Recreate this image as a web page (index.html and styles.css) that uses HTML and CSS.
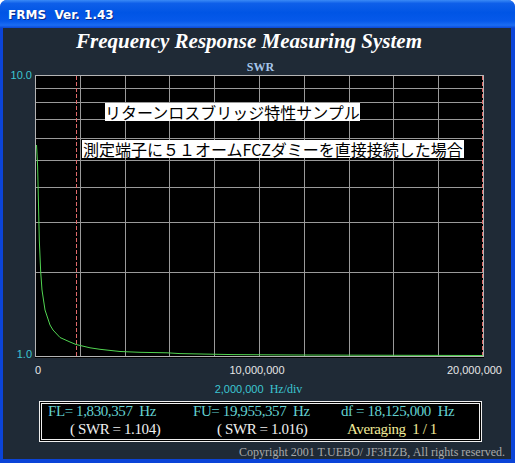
FILE: index.html
```html
<!DOCTYPE html>
<html lang="ja">

<head>
  <meta charset="UTF-8" />
  <title>FRMS Ver. 1.43</title>
  <link rel="stylesheet" href="styles.css">
</head>

<body>
  <div class="window">
    <div class="titlebar">FRMS&nbsp; Ver. 1.43</div>

    <div class="client">
      <h1 class="app-title">Frequency Response Measuring System</h1>
      <div class="swr-title">SWR</div>

      <div class="chart">
        <span class="y-label y-top">10.0</span>
        <span class="y-label y-bottom">1.0</span>

        <div class="plot">
          <svg class="plot-svg" width="449" height="283" viewBox="35 75 449 283">
            <rect x="35" y="75" width="449" height="283" fill="#000" />
            <!--縦グリッド 2,000,000 Hz/div -->
            <g stroke="#9a9a9a" stroke-width="1">
              <line x1="80.5" y1="75" x2="80.5" y2="357" />
              <line x1="125.5" y1="75" x2="125.5" y2="357" />
              <line x1="169.5" y1="75" x2="169.5" y2="357" />
              <line x1="214.5" y1="75" x2="214.5" y2="357" />
              <line x1="259.5" y1="75" x2="259.5" y2="357" />
              <line x1="304.5" y1="75" x2="304.5" y2="357" />
              <line x1="349.5" y1="75" x2="349.5" y2="357" />
              <line x1="393.5" y1="75" x2="393.5" y2="357" />
              <line x1="438.5" y1="75" x2="438.5" y2="357" />
              <!-- 対数グリッド 2..9 -->
              <line x1="35" y1="88.5" x2="483" y2="88.5" />
              <line x1="35" y1="102.5" x2="483" y2="102.5" />
              <line x1="35" y1="119.5" x2="483" y2="119.5" />
              <line x1="35" y1="138.5" x2="483" y2="138.5" />
              <line x1="35" y1="160.5" x2="483" y2="160.5" />
              <line x1="35" y1="187.5" x2="483" y2="187.5" />
              <line x1="35" y1="222.5" x2="483" y2="222.5" />
              <line x1="35" y1="272.5" x2="483" y2="272.5" />
            </g>
            <rect x="35.5" y="75.5" width="448" height="281" fill="none" stroke="#b4b4b4" />
            <!-- FL / FU -->
            <g stroke="#e06a6a" stroke-dasharray="4 2">
              <line x1="76.5" y1="76" x2="76.5" y2="357" />
              <line x1="482.5" y1="76" x2="482.5" y2="357" />
            </g>
            <polyline fill="none" stroke="#52d552" stroke-width="1"
              points="36.5,145 36.8,150 37.6,166 38.3,196 39.3,240 40.7,272 42,290 45,310 50,325 53,330 60,337.5 70,342 76,344.5 90,347.8 100,349.3 120,351.5 140,352.3 167,352.8 180,353.6 233,354.6 300,355 400,355.3 483,355.5" />
          </svg>

          <div class="note note-1">リターンロスブリッジ特性サンプル</div>
          <div class="note note-2">測定端子に５１オームFCZダミーを直接接続した場合</div>
        </div>

        <span class="x-label x-min">0</span>
        <span class="x-label x-mid">10,000,000</span>
        <span class="x-label x-max">20,000,000</span>
      </div>

      <div class="div-label">2,000,000&nbsp; <span class="unit">Hz/div</span></div>

      <div class="info">
        <span class="freq">FL= 1,830,357  Hz</span>
        <span class="freq">FU= 19,955,357  Hz</span>
        <span class="freq">df = 18,125,000  Hz</span>
        <span class="swr swr-l">( SWR = 1.104)</span>
        <span class="swr swr-u">( SWR = 1.016)</span>
        <span class="avg">Averaging  1 / 1</span>
      </div>

      <div class="copyright">Copyright 2001 T.UEBO/ JF3HZB, All rights reserved.</div>
    </div>
  </div>
</body>

</html>
```

FILE: styles.css
```css
body {
  margin: 0;
  background-color: #ffffff;
}

.window {
  width: 515px;
  height: 463px;
  background-color: #0b44d8;
  border-radius: 7px 7px 0 0;
  overflow: hidden;
}

.titlebar {
  height: 28px;
  padding-left: 8px;
  background: linear-gradient(to bottom, #3a8af6 0%, #0e5fe9 12%, #0055e5 45%, #0659ea 75%, #1b6cf2 90%, #0a47d4 100%);
  color: #ffffff;
  font-family: "DejaVu Sans", sans-serif;
  font-weight: bold;
  font-size: 12px;
  line-height: 30px;
  text-shadow: 1px 1px 0 #0a2a8a;
  white-space: pre;
}

.client {
  height: 431px;
  margin: 0 4px 4px 3px;
  background-color: #1f2a36;
  overflow: hidden;
}

.app-title {
  margin: 1px 0 0;
  padding-right: 16px;
  text-align: center;
  font-family: "Liberation Serif", serif;
  font-style: italic;
  font-weight: bold;
  font-size: 21px;
  line-height: 24px;
  color: #ffffff;
}

.swr-title {
  margin-top: 7px;
  padding-left: 7px;
  text-align: center;
  font-family: "Liberation Serif", serif;
  font-weight: bold;
  font-size: 12px;
  line-height: 14px;
  color: #a6c6ea;
}

.chart {
  position: relative;
  height: 307px;
}

.plot {
  position: relative;
  width: 449px;
  height: 283px;
  margin: 1px 0 0 32px;
}

.plot-svg {
  display: block;
}

/* подписи поверх графика */
.note {
  position: absolute;
  background-color: #ffffff;
  color: #000000;
  font-family: "Noto Sans CJK JP", sans-serif;
  font-size: 16px;
  line-height: 18px;
  white-space: nowrap;
}

.note-1 {
  left: 70px;
  top: 28px;
}

.note-2 {
  left: 47px;
  top: 65px;
  padding: 0 1px;
}

.y-label,
.x-label {
  position: absolute;
  font-family: "Liberation Sans", sans-serif;
  font-size: 11px;
  line-height: 12px;
}

.y-label {
  left: 0;
  width: 29px;
  text-align: right;
  color: #3cc6d2;
}

.y-top {
  top: -6px;
}

.y-bottom {
  top: 273px;
}

.x-label {
  top: 289px;
  color: #e6e6e6;
}

.x-min {
  left: 32px;
}

.x-mid {
  left: 254px;
  transform: translateX(-50%);
}

.x-max {
  right: 9px;
}

.div-label {
  padding-left: 3px;
  text-align: center;
  font-family: "Liberation Sans", sans-serif;
  font-size: 11px;
  line-height: 14px;
  color: #3cc6d2;
}

.div-label .unit {
  font-family: "Liberation Serif", serif;
  font-size: 12px;
}

.info {
  display: grid;
  grid-template-columns: 145px 148px 1fr;
  width: 443px;
  height: 41px;
  box-sizing: border-box;
  margin: 5px 0 0 36px;
  padding-left: 6px;
  border: 3px double #f0f0f0;
  background-color: #000000;
  font-family: "Liberation Serif", serif;
  font-size: 15px;
  line-height: 15px;
  letter-spacing: -0.4px;
  white-space: pre;
}

.freq {
  color: #63d0d0;
}

.swr {
  color: #f0f0f0;
}

.swr-l {
  padding-left: 22px;
}

.swr-u {
  padding-left: 24px;
}

.avg {
  padding-left: 6px;
  color: #f2eb9a;
}

.copyright {
  margin-top: 3px;
  padding-right: 6px;
  text-align: right;
  font-family: "Liberation Serif", serif;
  font-size: 12px;
  line-height: 14px;
  color: #a9a9a9;
}
```
